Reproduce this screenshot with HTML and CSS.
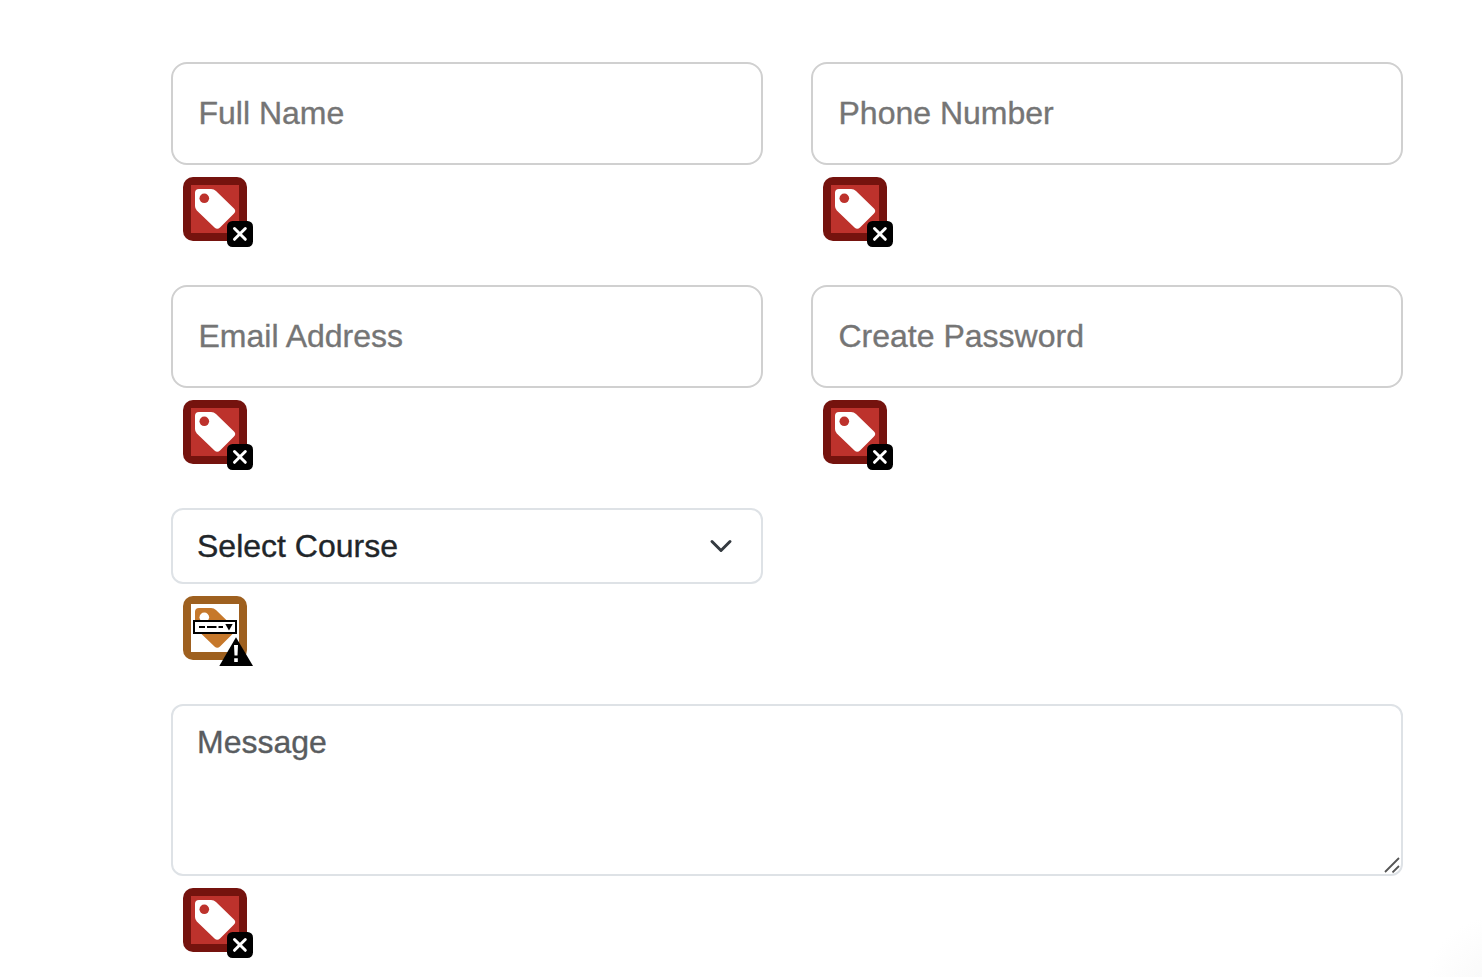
FILE: index.html
```html
<!DOCTYPE html>
<html lang="en">
<head>
<meta charset="utf-8">
<title>Registration</title>
<link rel="stylesheet" href="styles.css">
</head>
<body>
<svg class="defs" width="0" height="0">
  <defs>
    <path id="tag" d="M16 12H28Q31 12 33 14L51 31.500Q53.500 34 51 36.500L37 50.500Q34.300 53.200 31.500 50.500L13.800 33.500Q12 31.700 12 29V16Q12 12 16 12Z"/>
    <symbol id="missing" viewBox="0 0 70 70">
      <rect width="64" height="64" rx="10" fill="#75130e"/>
      <rect x="8" y="8" width="48" height="48" fill="#bd322c"/>
      <use href="#tag" fill="#fff"/>
      <circle cx="21.300" cy="21.300" r="4.800" fill="#bd322c"/>
      <rect x="44" y="44" width="26" height="26" rx="5.500"/>
      <path d="M51.500 51.500 62.300 62.300M62.300 51.500 51.500 62.300" stroke="#fff" stroke-width="3" stroke-linecap="round"/>
    </symbol>
    <symbol id="select-missing" viewBox="0 0 70 70">
      <rect width="64" height="64" rx="10" fill="#9e601f"/>
      <rect x="8" y="8" width="48" height="48" fill="#fff"/>
      <use href="#tag" fill="#c6782b"/>
      <circle cx="21.300" cy="21.300" r="4.800" fill="#fff"/>
      <rect x="11" y="25" width="42" height="12" fill="#fff" stroke="#000" stroke-width="2"/>
      <path d="M16 31H22M24 31H33.500M35.500 31H40" stroke="#000" stroke-width="2"/>
      <path d="M42.300 28H49.700L46 34.500Z"/>
      <path d="M53 41.300 70 70H36.300Z"/>
      <path d="M51 49H55L54.500 59.500H51.500ZM51.200 62.300H54.800V66H51.200Z" fill="#fff"/>
    </symbol>
  </defs>
</svg>
<form class="form">
  <div class="field">
    <input class="input" type="text" placeholder="Full Name">
    <svg class="flag"><use href="#missing"/></svg>
  </div>
  <div class="field">
    <input class="input" type="text" placeholder="Phone Number">
    <svg class="flag"><use href="#missing"/></svg>
  </div>
  <div class="field">
    <input class="input" type="text" placeholder="Email Address">
    <svg class="flag"><use href="#missing"/></svg>
  </div>
  <div class="field">
    <input class="input" type="text" placeholder="Create Password">
    <svg class="flag"><use href="#missing"/></svg>
  </div>
  <div class="field">
    <div class="select">
      <span>Select Course</span>
      <svg class="chevron" viewBox="0 0 24 24"><path d="M3 7.500 12 16.500 21 7.500" fill="none" stroke="#343a40" stroke-width="3" stroke-linecap="round" stroke-linejoin="round"/></svg>
    </div>
    <svg class="flag"><use href="#select-missing"/></svg>
  </div>
  <div class="field field-wide">
    <div class="message">
      <textarea class="textarea" placeholder="Message"></textarea>
      <svg class="grip" viewBox="0 0 16 16"><path d="M1 15 15 1M8.500 15.500 15 9" stroke="#555" stroke-width="1.800"/></svg>
    </div>
    <svg class="flag"><use href="#missing"/></svg>
  </div>
</form>
</body>
</html>
```
FILE: styles.css
```css
* {
  box-sizing: border-box;
}

body {
  margin: 0;
  height: 977px;
  overflow: hidden;
  background: radial-gradient(circle at 1500px 990px, #f8f8f8 0, #fff 75px) #fff;
  font-family: "Liberation Sans", Arial, sans-serif;
  font-size: 32px;
  -webkit-text-stroke: 0.35px;
}

.defs {
  display: block;
}

.form {
  display: grid;
  grid-template-columns: 592px 592px;
  gap: 38px 48px;
  padding: 62px 0 0 171px;
}

.field {
  display: flex;
  flex-direction: column;
  gap: 12px;
}

.field-wide {
  grid-column: 1 / -1;
}

.input,
.select,
.textarea {
  width: 100%;
  margin: 0;
  background: #fff;
  font: inherit;
  outline: none;
}

.input {
  height: 103px;
  padding: 0 25.5px;
  border: 2px solid #d0d0d0;
  border-radius: 16px;
}

.input::placeholder {
  color: #757575;
  opacity: 1;
}

.select {
  display: flex;
  align-items: center;
  justify-content: space-between;
  height: 76px;
  padding: 0 28px 0 24px;
  border: 2px solid #dee2e6;
  border-radius: 12px;
  color: #212529;
}

.chevron {
  width: 24px;
  height: 24px;
}

.message {
  position: relative;
  height: 172px;
}

.textarea {
  display: block;
  height: 172px;
  padding: 12px 24px;
  border: 2px solid #dee2e6;
  border-radius: 12px;
  line-height: 48px;
  resize: none;
}

.textarea::placeholder {
  color: #595c5f;
  opacity: 1;
}

.grip {
  position: absolute;
  right: 3px;
  bottom: 3px;
  width: 16px;
  height: 16px;
}

.flag {
  width: 70px;
  height: 70px;
  margin-left: 12px;
}
```
